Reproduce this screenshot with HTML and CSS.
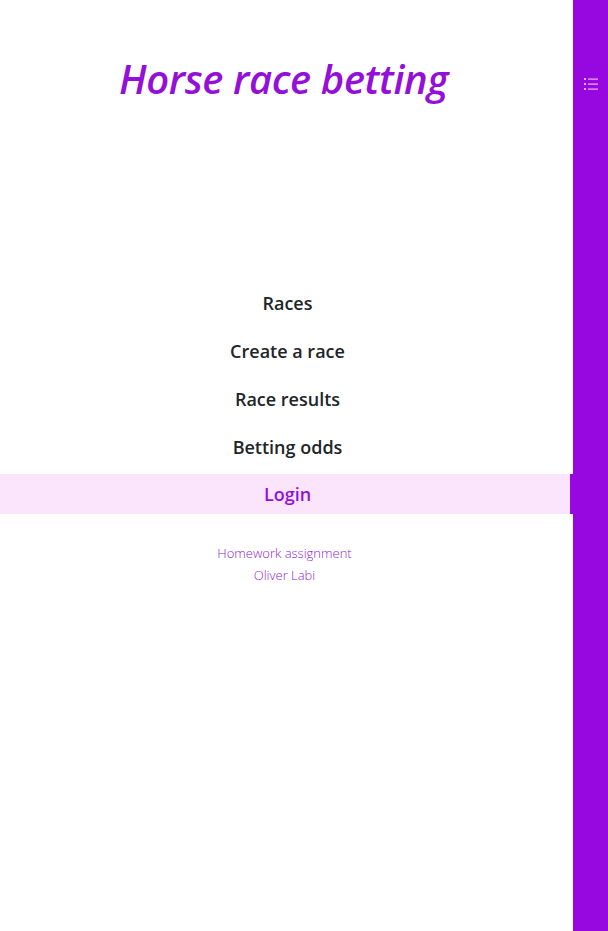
FILE: index.html
```html
<!DOCTYPE html>
<html>
<head>
<meta charset="utf-8">
<link rel="stylesheet" href="styles.css">
</head>
<body>
<div class="layout">
  <main class="main">
    <h1 class="title">Horse race betting</h1>
    <nav class="nav">
      <a class="nav-item">Races</a>
      <a class="nav-item">Create a race</a>
      <a class="nav-item">Race results</a>
      <a class="nav-item">Betting odds</a>
      <a class="nav-item active">Login</a>
    </nav>
    <footer class="footer">
      <div>Homework assignment</div>
      <div>Oliver Labi</div>
    </footer>
  </main>
  <aside class="sidebar">
    <svg class="menu-icon" width="14" height="14" viewBox="0 0 14 14">
      <g fill="#f2b6f7">
        <rect x="0" y="1" width="2" height="2"/>
        <rect x="0" y="6" width="2" height="2"/>
        <rect x="0" y="11" width="2" height="2"/>
        <rect x="4" y="1.5" width="10" height="1.2"/>
        <rect x="4" y="6.5" width="10" height="1.2"/>
        <rect x="4" y="11.5" width="10" height="1.2"/>
      </g>
    </svg>
  </aside>
</div>
</body>
</html>
```
FILE: styles.css
```css
html, body {
  margin: 0;
  padding: 0;
  height: 100%;
}
body {
  font-family: "Open Sans", "Noto Sans", sans-serif;
  background: #fff;
}
.layout {
  display: flex;
  min-height: 931px;
}
.main {
  flex: 1;
  display: flex;
  flex-direction: column;
  align-items: stretch;
}
.title {
  margin: 0;
  padding-top: 55px;
  padding-right: 6px;
  text-align: center;
  font-size: 40px;
  line-height: 48px;
  font-style: italic;
  font-weight: 600;
  color: #9410d8;
  letter-spacing: -0.4px;
}
.nav {
  margin-top: 180px;
  display: flex;
  flex-direction: column;
  gap: 8px;
}
.nav-item {
  height: 40px;
  line-height: 40px;
  text-align: center;
  font-size: 18px;
  font-weight: 600;
  color: #212529;
  padding-left: 2px;
}
.nav-item:last-child {
  margin-top: -1px;
}
.nav-item.active {
  background: #fae5fd;
  color: #9410d8;
  box-shadow: inset -3px 0 0 #9708e0;
}
.footer {
  margin-top: 28px;
  padding-right: 4px;
  text-align: center;
  font-size: 13px;
  line-height: 22px;
  font-weight: 300;
  color: #9225d4;
}
.sidebar {
  width: 35px;
  background: #9708e0;
  display: flex;
  justify-content: center;
  align-items: flex-start;
  padding-top: 77px;
  box-sizing: border-box;
}
.menu-icon {
  display: block;
}
```
